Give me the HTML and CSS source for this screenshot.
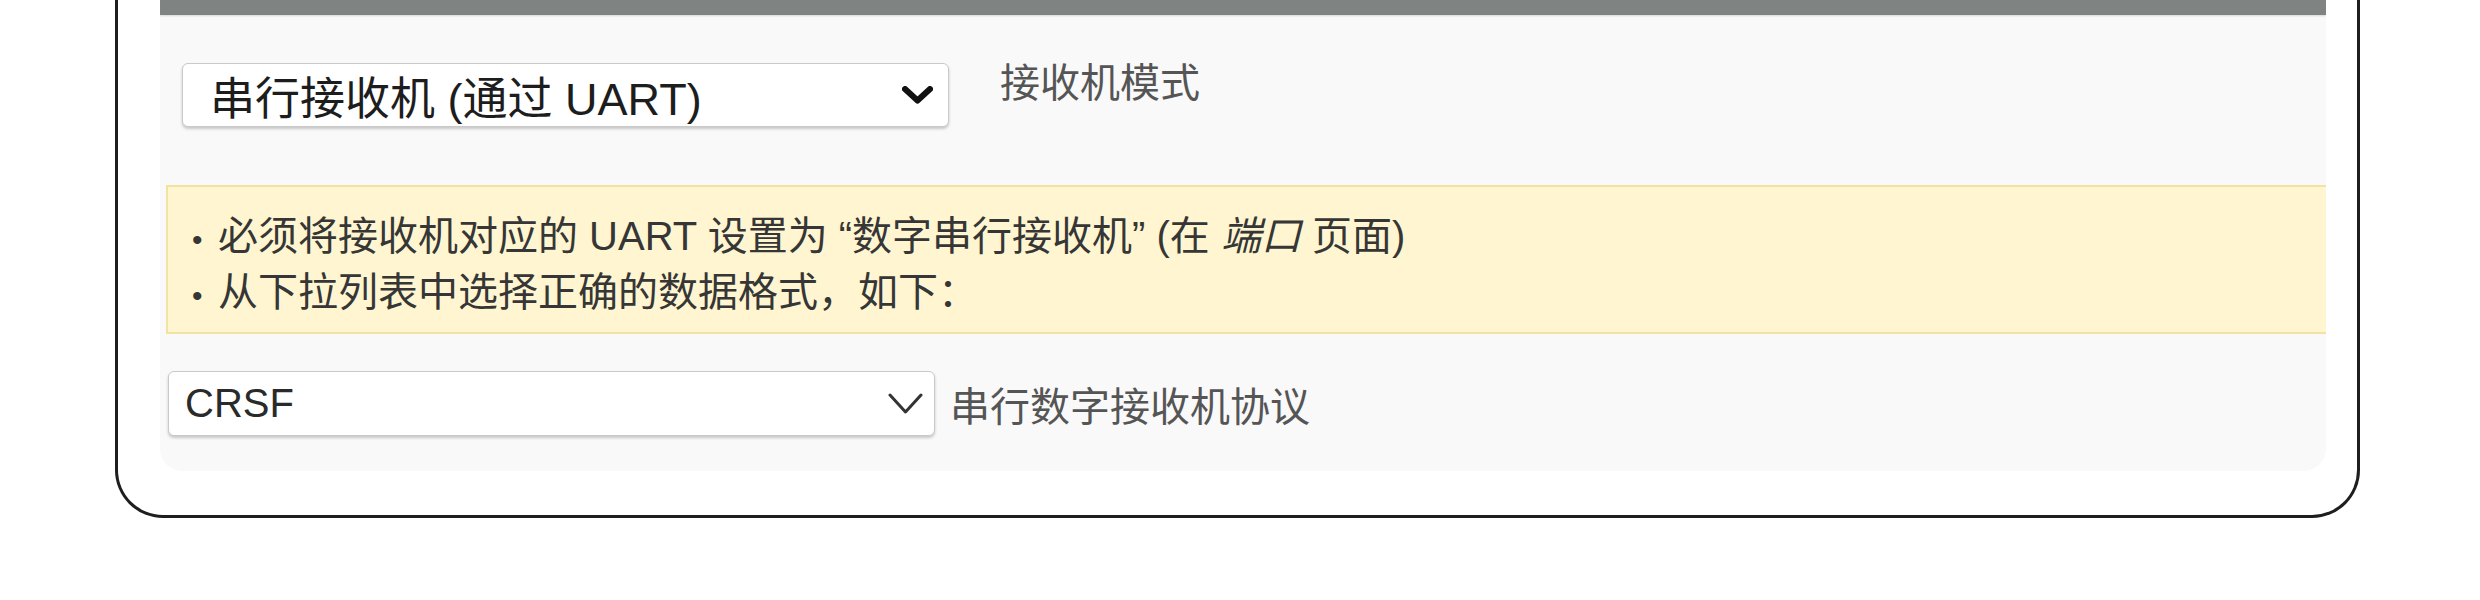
FILE: index.html
```html
<!DOCTYPE html>
<html lang="zh-CN">
<head>
<meta charset="utf-8">
<title>接收机</title>
<link rel="stylesheet" href="styles.css">
</head>
<body>
<div class="frame">
  <div class="panel">
    <div class="panel-bar"></div>
    <div class="panel-body">
      <div class="row row-mode">
        <div class="select select-mode">
          <span class="select-text">串行接收机 (通过 UART)</span>
          <svg class="chev chev-bold" viewBox="0 0 31 18" width="31" height="18"><path d="M3 3 L15.5 14.5 L28 3" fill="none" stroke="#111" stroke-width="6" stroke-linecap="round" stroke-linejoin="round"/></svg>
        </div>
        <div class="label label-top">接收机模式</div>
      </div>
      <div class="note">
        <div class="note-line"><span class="bullet">•</span>必须将接收机对应的 UART 设置为 “数字串行接收机” (在 <em>端口</em> 页面)</div>
        <div class="note-line"><span class="bullet">•</span>从下拉列表中选择正确的数据格式，如下：</div>
      </div>
      <div class="row row-proto">
        <div class="select select-proto">
          <span class="select-text">CRSF</span>
          <svg class="chev chev-thin" viewBox="0 0 35 21" width="35" height="21"><path d="M2 2 L17.5 19 L33 2" fill="none" stroke="#333" stroke-width="3" stroke-linecap="round" stroke-linejoin="round"/></svg>
        </div>
        <div class="label label-mid">串行数字接收机协议</div>
      </div>
    </div>
  </div>
</div>
</body>
</html>
```
FILE: styles.css
```css
html, body {
  margin: 0;
  padding: 0;
  background: #ffffff;
}
body {
  font-family: "Liberation Sans", "Noto Sans CJK SC", sans-serif;
  width: 2480px;
  height: 600px;
  overflow: hidden;
}
.frame {
  box-sizing: border-box;
  width: 2245px;
  margin-left: 115px;
  border: 3px solid #1e1e1e;
  border-top: none;
  border-radius: 0 0 48px 48px;
  padding: 0 31px 44px 42px;
}
.panel {
  background: #f9f9f9;
  border-radius: 0 0 22px 22px;
  overflow: hidden;
}
.panel-bar {
  height: 15px;
  background: #7f8381;
  box-shadow: 0 1px 2px rgba(0,0,0,0.15);
}
.panel-body {
  display: flex;
  flex-direction: column;
  padding: 48px 0 35px 0;
}
.row {
  display: flex;
}
.row-mode {
  padding-left: 22px;
  align-items: flex-start;
  gap: 51px;
}
.row-proto {
  padding-left: 8px;
  align-items: center;
  gap: 15px;
  margin-top: 37px;
}
.select {
  box-sizing: border-box;
  width: 767px;
  background: #ffffff;
  border: 1px solid #c9c9c9;
  border-radius: 6px;
  box-shadow: 0 2px 3px rgba(0,0,0,0.2);
  display: flex;
  align-items: center;
  justify-content: space-between;
  color: #1d1d1d;
}
.select-mode {
  height: 64px;
  padding: 0 15px 0 27px;
  font-size: 45px;
}
.select-proto {
  height: 65px;
  padding: 0 11px 0 16px;
  font-size: 40px;
  color: #2a2a2a;
}
.select-text {
  white-space: nowrap;
}
.chev {
  flex: none;
  display: block;
}
.label {
  font-size: 40px;
  color: #555555;
  white-space: nowrap;
}
.label-top {
  line-height: 38px;
  padding-top: 1px;
}
.note {
  margin: 58px 0 0 6px;
  background: #fff6d1;
  border: 2px solid #f2e3a3;
  border-right: none;
  padding: 23px 0 10px 24px;
  font-size: 40px;
  line-height: 52px;
  color: #363636;
}
.note-line {
  white-space: nowrap;
}
.bullet {
  display: inline-block;
  width: 26px;
  font-size: 30px;
}
.note em {
  font-style: italic;
}
```
